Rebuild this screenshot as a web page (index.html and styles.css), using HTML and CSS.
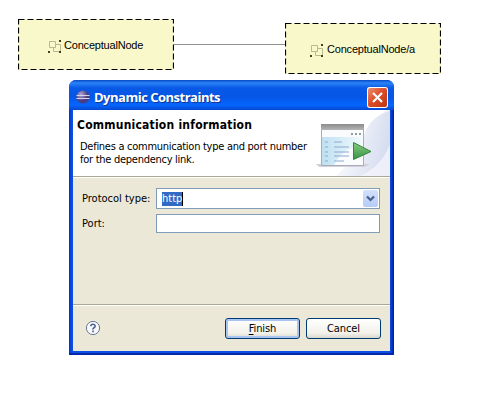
FILE: index.html
```html
<!DOCTYPE html>
<html lang="en">
<head>
<meta charset="utf-8">
<title>Dynamic Constraints</title>
<link rel="stylesheet" href="styles.css">
</head>
<body>
<main class="canvas">
  <svg class="link" width="112" height="2"><path d="M0 .5H112" stroke="#919191"/></svg>
  <div class="node node-a">
    <svg class="outline" width="156" height="51"><rect x=".5" y=".5" width="155" height="50" fill="none" stroke="#000" stroke-width="1.2" stroke-dasharray="6 3"/></svg>
    <svg class="node-icon" width="14" height="14"><path d="M1.500 1.500h6v3h5v7h-7v-4h-4zM7.500 4.500v3h-2" fill="none" stroke="#b9ba8c"/><path d="M11 0h2v2h-2zM0 11h2v2H0zM11 11h2v2h-2z" fill="#3d4222"/></svg>
    <span class="name-a">ConceptualNode</span>
  </div>
  <div class="node node-b">
    <svg class="outline" width="156" height="51"><rect x=".5" y=".5" width="155" height="50" fill="none" stroke="#000" stroke-width="1.2" stroke-dasharray="6 3"/></svg>
    <svg class="node-icon" width="14" height="14"><path d="M1.500 1.500h6v3h5v7h-7v-4h-4zM7.500 4.500v3h-2" fill="none" stroke="#b9ba8c"/><path d="M11 0h2v2h-2zM0 11h2v2H0zM11 11h2v2h-2z" fill="#3d4222"/></svg>
    <span class="name-b">ConceptualNode/a</span>
  </div>

  <section class="dialog">
    <div class="titlebar">
      <svg width="14" height="14" viewBox="0 0 14 14">
        <defs><radialGradient id="orb" cx=".35" cy=".3"><stop offset="0" stop-color="#b3a6cf"/><stop offset="1" stop-color="#493c85"/></radialGradient></defs>
        <circle cx="7" cy="7" r="6.500" fill="url(#orb)"/><path d="M.5 5.500h13M.5 8.500h13" stroke="#d6d5ee"/>
      </svg>
      <span class="title">Dynamic Constraints</span>
      <span class="close"><svg width="21" height="21"><path d="M6 6l9 9M15 6l-9 9" stroke="#fff" stroke-width="2.200"/></svg></span>
    </div>
    <header class="banner">
      <div class="intro">
        <h1>Communication information</h1>
        <p>Defines a communication type and port number<br>for the dependency link.</p>
      </div>
      <svg class="art" width="74" height="66">
        <defs>
          <linearGradient id="wash" x1="0" y1="0" x2="1" y2=".3"><stop offset=".1" stop-color="#fff"/><stop offset="1" stop-color="#d7def0"/></linearGradient>
          <linearGradient id="pane"><stop offset="0" stop-color="#bfe0f2"/><stop offset="1" stop-color="#f1fafd"/></linearGradient>
          <linearGradient id="bar" x1="0" y1="0" x2="0" y2="1"><stop offset="0" stop-color="#8b8b8b"/><stop offset="1" stop-color="#b5b5b5"/></linearGradient>
          <linearGradient id="play" x1="0" y1="0" x2="0" y2="1"><stop offset="0" stop-color="#8bcb7c"/><stop offset="1" stop-color="#369447"/></linearGradient>
        </defs>
        <path d="M74 0Q56 7 50 20Q42 46 20 66H74z" fill="url(#wash)"/>
        <path d="M44 66Q66 56 74 34V66z" fill="#f5f6fc" opacity=".75"/>
        <g transform="translate(-10)">
          <path d="M10 54h54l-5 3H13z" fill="#d3cfdc"/>
          <path d="M15.500 14.500h42v41h-42z" fill="#f9fbfc" stroke="#a6adb4"/>
          <path d="M15 14h43v6H15z" fill="url(#bar)"/>
          <path d="M16 27h40v9q-20 2-28 19H16z" fill="url(#pane)"/>
          <path d="M45 24h2m2 0h2m2 0h2" stroke="#9399a1" stroke-width="2"/>
          <path d="M19 32h3m-3 5h3m-3 5h3m-3 4h3m-3 5h3M28 32h8m-8 5h15m-15 5h15m-15 4h15m-15 5h10" stroke="#8ea9cb" stroke-width="1.200"/>
          <path d="M47.500 32.500L65 41.500l-17.500 8z" fill="url(#play)" stroke="#34853d"/>
        </g>
      </svg>
    </header>
    <div class="form">
      <div class="row combo-row"><label>Protocol type:</label><div class="combo"><span class="sel">http</span><span class="arrow"><svg width="15" height="17"><path d="M4 6.500l3.500 3.500L11 6.500" fill="none" stroke="#465f8c" stroke-width="2.200"/></svg></span></div></div>
      <div class="row"><label>Port:</label><div class="field"></div></div>
    </div>
    <footer class="actions">
      <svg class="help" width="16" height="16"><circle cx="8" cy="8" r="6.600" fill="#f8f9fb" stroke="#68779a"/><path d="M5.700 6.200Q6 4.200 8 4.200T10.200 6Q10.200 7 9 7.700T8 9.500M8 10.600v1.600" fill="none" stroke="#4c5c86" stroke-width="1.600"/></svg>
      <button class="btn primary"><u>F</u>inish</button>
      <button class="btn">Cancel</button>
    </footer>
  </section>
</main>
</body>
</html>
```
FILE: styles.css
```css
* { box-sizing: border-box; }
body { margin: 0; background: #fff; color: #000; font: 11px/13px "DejaVu Sans Condensed", "Noto Sans", sans-serif; }
.canvas { position: relative; width: 480px; height: 402px; overflow: hidden; white-space: nowrap; }
.canvas svg { display: block; flex: none; }
.link { position: absolute; left: 174px; top: 44px; }
.node { position: absolute; width: 156px; height: 51px; background: #f8f8ca; display: flex; align-items: center; gap: 2px; font-family: "Liberation Sans", sans-serif; font-size: 11px; letter-spacing: -.2px; }
.node-a { left: 18px; top: 19px; padding-left: 30px; }
.node-b { left: 285px; top: 23px; padding-left: 25px; gap: 3px; }
.node .node-icon { position: relative; top: 2px; }
.node span { position: relative; top: 1px; }
.outline { position: absolute; left: 0; top: 0; }
.dialog { position: absolute; left: 69px; top: 80px; width: 325px; height: 275px; padding: 0 4px 4px; border-radius: 7px 7px 0 0; background: linear-gradient(90deg, #0831c9, #0a50e4 3px, #0a50e4 calc(100% - 4px), #0019a0); box-shadow: inset 0 -2px #0528a8; display: flex; flex-direction: column; }
.titlebar { height: 30px; margin: 0 -4px; padding: 4px 6px 0 7px; border-radius: 7px 7px 0 0; display: flex; align-items: center; gap: 4px; background: linear-gradient(#0748c8, #2b83f6 3px, #0759e6 8px, #0556e5 17px, #0666ff 25px, #0648ce); color: #fff; }
.title { flex: 1; font: bold 13px/16px "Open Sans", sans-serif; letter-spacing: -.5px; text-shadow: 1px 1px #10369a; }
.close { width: 21px; height: 21px; border-radius: 3px; background: linear-gradient(135deg, #ee9777, #dc4a25 50%, #b93414); box-shadow: inset 0 0 0 1px #fff; }
.banner { height: 66px; background: #fff; display: flex; justify-content: space-between; }
.intro { padding: 8px 0 0 4px; }
h1 { margin: 0; font: bold 12px/15px "DejaVu Sans Condensed", sans-serif; letter-spacing: .22px; }
p { margin: 7px 0 0 3px; letter-spacing: -.27px; }
.art { margin-left: -40px; }
.form { height: 128px; padding: 11px 10px 0 9px; background: #ebe8d8; border-top: 1px solid #aaa795; box-shadow: inset 0 1px #fff; }
.row { display: flex; align-items: center; height: 19px; }
.combo-row { height: 21px; margin-bottom: 5px; }
.row label { width: 74px; }
.combo { width: 224px; height: 21px; display: flex; align-items: center; justify-content: space-between; padding: 1px 1px 1px 5px; border: 1px solid #7f9db9; background: #fff; }
.sel { height: 14px; line-height: 14px; background: #316ac5; color: #fff; border-right: 1px solid #000; }
.arrow { width: 15px; height: 17px; border-radius: 2px; background: linear-gradient(#d3e0fd, #b5cbf8); }
.field { width: 224px; height: 19px; border: 1px solid #7f9db9; background: #fff; }
.actions { flex: 1; display: flex; align-items: flex-start; padding: 13px 9px 0 12px; background: #ebe8d8; border-top: 1px solid #aaa795; box-shadow: inset 0 1px #fff; }
.help { margin: 2px auto 0 0; }
.btn { width: 75px; height: 21px; margin: 0 0 0 6px; padding: 0; border: 1px solid #003c74; border-radius: 3px; background: linear-gradient(#fff, #f2f1e9 75%, #dad6cc); font: inherit; letter-spacing: -.1px; color: #000; }
.primary { box-shadow: inset 0 0 0 2px #a9c4f0; }
u { text-underline-offset: 2px; }
```
